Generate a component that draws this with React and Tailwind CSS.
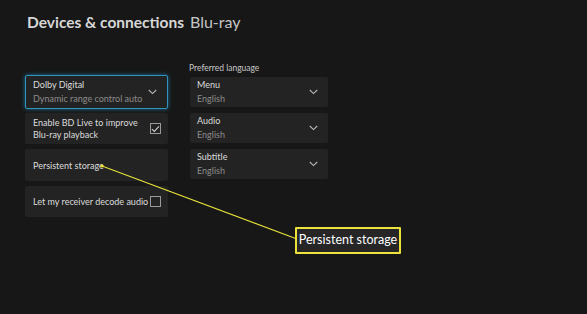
import React from "react";

const Chevron = () => (
  <svg width="9" height="6" viewBox="0 0 9 6" fill="none" className="shrink-0">
    <path d="M0.8 1l3.7 3.6L8.2 1" stroke="#b8b8b8" strokeWidth="1.1" />
  </svg>
);

const Check = ({ checked }) => (
  <div className="w-[11px] h-[11px] border-[1.5px] border-[#9a9a9a] flex items-center justify-center shrink-0">
    {checked && (
      <svg width="9" height="8" viewBox="0 0 9 8" fill="none">
        <path d="M1 4.2l2.3 2.3L8 1.3" stroke="#c8c8c8" strokeWidth="1.2" />
      </svg>
    )}
  </div>
);

const Select = ({ label, value, focused, cls }) => (
  <div
    className={
      "flex items-center justify-between bg-[#232323] rounded-[2px] pr-[10px] shrink-0 " +
      (focused ? "border-[1.5px] border-[#2f93bd] shadow-[0_0_4px_#1d6f92] pl-[7px] " : "pl-[7px] ") +
      cls
    }
  >
    <div className="flex flex-col leading-[14px] whitespace-nowrap">
      <span className="text-[#dcdcdc] text-[9px]">{label}</span>
      <span className="text-[#8c8c8c] text-[9px]">{value}</span>
    </div>
    <Chevron />
  </div>
);

export default function App() {
  return (
    <div
      className="relative w-[587px] h-[314px] bg-[#171717] overflow-hidden"
      style={{ fontFamily: 'Lato, "Open Sans", sans-serif' }}
    >
      <div className="flex items-baseline gap-[6px] pl-[27px] pt-[10px] whitespace-nowrap">
        <span className="text-[#d6d6d6] text-[15.5px] font-bold">Devices &amp; connections</span>
        <span className="text-[#c4c4c4] text-[16px]">Blu-ray</span>
      </div>

      <div className="flex pl-[25px] mt-[28px] gap-[21px]">
        <div className="flex flex-col gap-[4px] w-[143px] pt-[13px]">
          <Select label="Dolby Digital" value="Dynamic range control auto" focused cls="h-[34px]" />
          <div className="h-[31px] shrink-0 bg-[#232323] rounded-[2px] flex items-center justify-between pl-[8px] pr-[7px]">
            <span className="text-[#dcdcdc] text-[9px] leading-[12px] whitespace-nowrap">
              Enable BD Live to improve
              <br />
              Blu-ray playback
            </span>
            <Check checked />
          </div>
          <div className="h-[32px] shrink-0 bg-[#232323] rounded-[2px] flex items-center pl-[8px] mt-[1px]">
            <span className="text-[#dcdcdc] text-[9px] whitespace-nowrap">Persistent storage</span>
          </div>
          <div className="h-[31px] shrink-0 bg-[#232323] rounded-[2px] flex items-center justify-between pl-[8px] pr-[7px] mt-[1px]">
            <span className="text-[#dcdcdc] text-[9px] whitespace-nowrap">Let my receiver decode audio</span>
            <Check />
          </div>
        </div>

        <div className="flex flex-col w-[139px]">
          <span className="text-[#c8c8c8] text-[8.5px] leading-[12px] mb-[3px] whitespace-nowrap">Preferred language</span>
          <div className="flex flex-col gap-[6px] pl-[1px]">
            <Select label="Menu" value="English" cls="h-[30px]" />
            <Select label="Audio" value="English" cls="h-[30px]" />
            <Select label="Subtitle" value="English" cls="h-[30px]" />
          </div>
        </div>
      </div>

      <svg className="absolute left-0 top-0 pointer-events-none" width="587" height="314">
        <line x1="102" y1="166" x2="297" y2="239" stroke="#e6e03a" strokeWidth="1.1" />
        <circle cx="102" cy="166" r="1.6" fill="#e6e03a" />
      </svg>

      <div className="absolute left-[295px] top-[227px] w-[106px] h-[27px] border-2 border-[#ebe33c] bg-[#262626] rounded-[1px] flex items-center justify-center">
        <span className="text-white text-[12.5px] leading-none whitespace-nowrap">Persistent storage</span>
      </div>
    </div>
  );
}
